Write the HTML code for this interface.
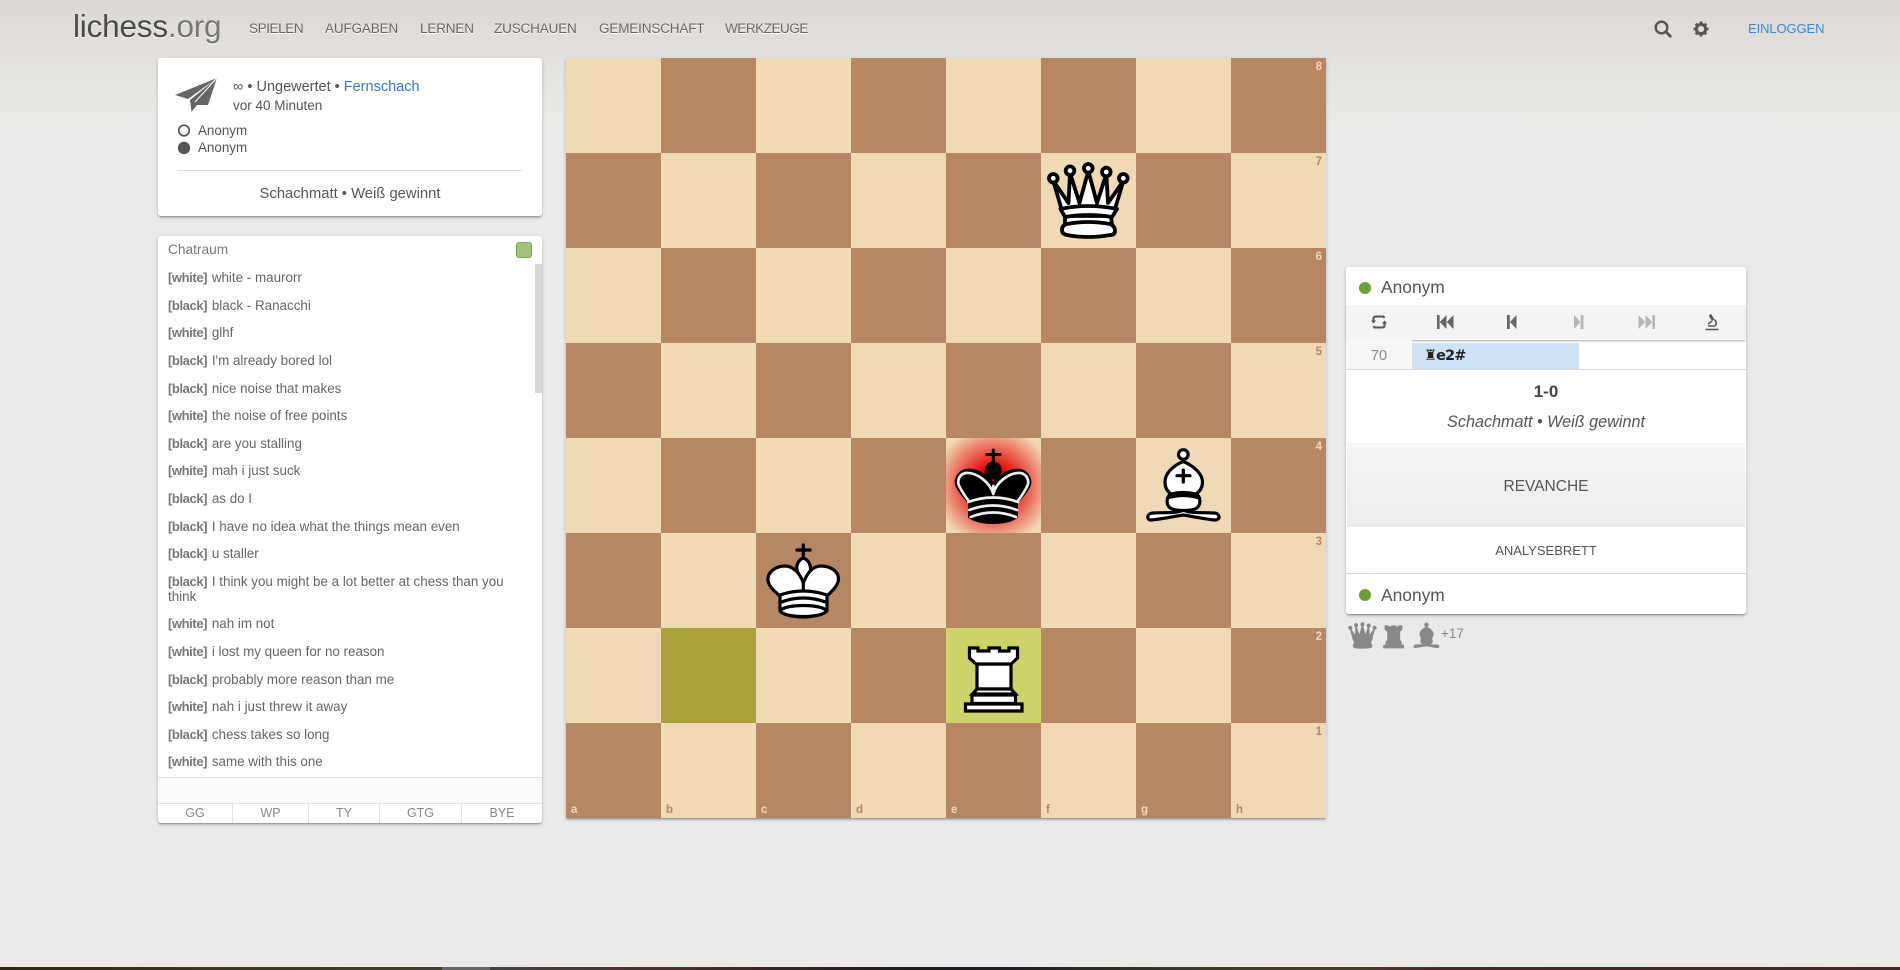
<!DOCTYPE html>
<html lang="de"><head><meta charset="utf-8"><title>lichess.org</title>
<style>
html,body{margin:0;padding:0}
body{width:1900px;height:970px;position:relative;overflow:hidden;font-family:"Liberation Sans",sans-serif;color:#555;background:linear-gradient(to bottom,#dcd9d4 0,#ebeae8 116px,#ebeae8 100%)}
.a{position:absolute;white-space:nowrap;line-height:1}
.card{position:absolute;background:#fff;border-radius:3px;box-shadow:0 2px 2px rgba(0,0,0,.14),0 2px 1px -1px rgba(0,0,0,.2),0 1px 5px rgba(0,0,0,.12)}
.nav{font-size:13.5px;color:#666;top:22px;text-shadow:0 1px 0 #fff;letter-spacing:-.15px}
.c{font-size:13.4px;left:168px;color:#666}
.c b{color:#777;letter-spacing:-.4px;font-size:13px;margin-right:1px}
.q{top:804px;font-size:12.5px;color:#888;text-align:center;line-height:19px;height:19px;border-right:1px solid #e2e2e2}
#board{position:absolute;left:566px;top:58px;width:760px;height:760px;box-shadow:0 2px 2px rgba(0,0,0,.14),0 2px 1px -1px rgba(0,0,0,.2),0 1px 5px rgba(0,0,0,.12);background:conic-gradient(#b58863 25%,#f0d9b5 0 50%,#b58863 0 75%,#f0d9b5 0) 0 0/190px 190px}
#board>div,#board>svg{position:absolute;width:95px;height:95px}
.k{position:absolute;font-size:11.5px;font-weight:bold;line-height:1}
</style></head><body>

<div class="a" style="left:73px;top:11px;font-size:31.5px;color:#4a4a4a;text-shadow:0 1px 0 #fff;letter-spacing:-.2px">lichess<span style="color:#777">.org</span></div>
<div class="a nav" style="left:249px;letter-spacing:-.4px">SPIELEN</div>
<div class="a nav" style="left:325px">AUFGABEN</div>
<div class="a nav" style="left:420px">LERNEN</div>
<div class="a nav" style="left:494px">ZUSCHAUEN</div>
<div class="a nav" style="left:599px">GEMEINSCHAFT</div>
<div class="a nav" style="left:725px;letter-spacing:-.45px">WERKZEUGE</div>

<svg class="a" style="left:1654px;top:20px" width="18" height="18" viewBox="0 0 18 18"><circle cx="7.5" cy="7.5" r="5.8" fill="none" stroke="#555" stroke-width="2.4"/><path d="M11.8 11.8L16.3 16.3" stroke="#555" stroke-width="2.8" stroke-linecap="round"/></svg>
<svg class="a" style="left:1693px;top:21px" width="16" height="16" viewBox="0 0 16 16"><circle cx="8" cy="8" r="4.6" fill="none" stroke="#555" stroke-width="3"/><path d="M8 .5V3M8 13v2.5M.5 8H3M13 8h2.5M2.7 2.7l1.8 1.8M11.5 11.5l1.8 1.8M13.3 2.7l-1.8 1.8M4.5 11.5l-1.8 1.8" stroke="#555" stroke-width="2.6"/></svg>
<div class="a" style="left:1748px;top:22px;font-size:13px;letter-spacing:-.1px;color:#3b87d8">EINLOGGEN</div>

<div class="card" style="left:158px;top:58px;width:384px;height:158px"></div>
<svg class="a" style="left:175px;top:78px" width="43" height="34" viewBox="0 0 43 34"><path d="M42 0L0 17l13 4z" fill="#666"/><path d="M42 0L15 22l1.5 12 5.5-7 11 0z" fill="#666"/><path d="M42 0L20 24" stroke="#fff" stroke-width="1" fill="none"/></svg>
<div class="a" style="left:233px;top:80px;font-size:14.5px;color:#555">∞ • Ungewertet • <span style="color:#3b78c4">Fernschach</span></div>
<div class="a" style="left:233px;top:99px;font-size:13.5px;color:#555">vor 40 Minuten</div>
<svg class="a" style="left:177px;top:123px" width="14" height="32" viewBox="0 0 14 32"><circle cx="7" cy="7.5" r="5.3" fill="#fff" stroke="#555" stroke-width="1.7"/><circle cx="7" cy="25" r="6.2" fill="#555"/></svg>
<div class="a" style="left:198px;top:124px;font-size:13.4px;color:#555">Anonym</div>
<div class="a" style="left:198px;top:141px;font-size:13.4px;color:#555">Anonym</div>
<div class="a" style="left:177px;top:170px;width:345px;height:1px;background:#ddd"></div>
<div class="a" style="left:158px;width:384px;text-align:center;top:187px;font-size:14.8px;color:#555">Schachmatt • Weiß gewinnt</div>

<div class="card" style="left:158px;top:236px;width:384px;height:587px"></div>
<div class="a" style="left:168px;top:243px;font-size:13.7px;color:#787878">Chatraum</div>
<div class="a" style="left:516px;top:242px;width:14px;height:14px;background:#a0c27a;border:1px solid #7ba84f;border-radius:3px"></div>
<div class="a" style="left:535px;top:264px;width:7px;height:129px;background:#d8d8d8"></div>
<div class="a c" style="top:271px"><b>[white]</b> white - maurorr</div>
<div class="a c" style="top:299px"><b>[black]</b> black - Ranacchi</div>
<div class="a c" style="top:326px"><b>[white]</b> glhf</div>
<div class="a c" style="top:354px"><b>[black]</b> I'm already bored lol</div>
<div class="a c" style="top:382px"><b>[black]</b> nice noise that makes</div>
<div class="a c" style="top:409px"><b>[white]</b> the noise of free points</div>
<div class="a c" style="top:437px"><b>[black]</b> are you stalling</div>
<div class="a c" style="top:464px"><b>[white]</b> mah i just suck</div>
<div class="a c" style="top:492px"><b>[black]</b> as do I</div>
<div class="a c" style="top:520px"><b>[black]</b> I have no idea what the things mean even</div>
<div class="a c" style="top:547px"><b>[black]</b> u staller</div>
<div class="a c" style="top:575px"><b>[black]</b> I think you might be a lot better at chess than you</div>
<div class="a c" style="top:590px">think</div>
<div class="a c" style="top:617px"><b>[white]</b> nah im not</div>
<div class="a c" style="top:645px"><b>[white]</b> i lost my queen for no reason</div>
<div class="a c" style="top:673px"><b>[black]</b> probably more reason than me</div>
<div class="a c" style="top:700px"><b>[white]</b> nah i just threw it away</div>
<div class="a c" style="top:728px"><b>[black]</b> chess takes so long</div>
<div class="a c" style="top:755px"><b>[white]</b> same with this one</div>
<div class="a" style="left:158px;top:777px;width:384px;background:#fafaf9;border-top:1px solid #ddd;border-bottom:1px solid #e2e2e2;box-sizing:border-box;height:27px"></div>
<div class="a q" style="left:158px;width:74px">GG</div>
<div class="a q" style="left:233px;width:75px">WP</div>
<div class="a q" style="left:309px;width:70px">TY</div>
<div class="a q" style="left:380px;width:81px">GTG</div>
<div class="a q" style="left:462px;width:80px;border:0">BYE</div>

<div id="board">
<div style="left:95px;top:570px;background:#aaa23a"></div>
<div style="left:380px;top:570px;background:#cdd26a"></div>
<div style="left:380px;top:380px;background:radial-gradient(ellipse at center,#f00 0%,#e70000 25%,rgba(169,0,0,0) 89%,rgba(158,0,0,0) 100%)"></div>

<svg style="left:475px;top:95px" viewBox="0 0 95 95"><g fill="#fff" stroke="#000" stroke-width="3.8" stroke-linejoin="round" stroke-linecap="round">
<path d="M20.5 56L12.3 28 27.5 50 29 20 38.5 50 47.3 18 56 50 65.3 21 67 50 82.3 28 74 56Z"/>
<path d="M24 63L24 72H71L70 63Z"/>
<path d="M19.5 56Q47 50 76 56L71 64Q47 60 24 64Z"/>
<path d="M26 71Q47 67 69 71Q74 73 74 78Q74 82 69 82Q47 86 26 82Q21 81 21 77Q21 72 26 71Z"/>
<circle cx="12.3" cy="25.3" r="4.3"/><circle cx="29" cy="17.7" r="4.3"/><circle cx="47.3" cy="15.3" r="4.3"/><circle cx="65.3" cy="19" r="4.3"/><circle cx="82.3" cy="25.3" r="4.3"/></g></svg>

<svg style="left:380px;top:380px" viewBox="0 0 95 95"><g fill="none" stroke-linecap="round" stroke-linejoin="round">
<path d="M47.3 12V26M41 16.5H54" stroke="#000" stroke-width="3"/>
<ellipse cx="47.3" cy="32.5" rx="8.5" ry="9" fill="#000"/>
<path d="M47.3 46C42 36 28 30 19 32C10 35 8 44 11 49C14 55 19 60 23 65L23 79C32 87 62 87 71 79L71 65C75 60 80 55 83 49C86 44 84 35 75 32C66 30 52 36 47.3 46Z" fill="#000" stroke="#000" stroke-width="2"/>
<path d="M47.3 56C44 44 30 34 20 35C13 36 11 43 13 47.5C15 52 19 58 23 63.5M47.3 56C50 44 64 34 74.5 35C81 36 83.5 43 81.5 47.5C79.5 52 75.5 58 71.5 63.5M47.3 48V56" stroke="#eee" stroke-width="2.7"/>
<path d="M22.3 64Q47 55 72 64M23.3 72Q47 63 71 72M24.7 79Q47 70 70 79" stroke="#eee" stroke-width="2.7"/>
</g></svg>

<svg style="left:570px;top:380px" viewBox="0 0 95 95"><g fill="#fff" stroke="#000" stroke-width="3.2" stroke-linejoin="round" stroke-linecap="round">
<circle cx="47.3" cy="16.5" r="4.8"/>
<path d="M17 75C28 74 40 76 47.3 72C55 76 66 74 78 75C84 75 85 82 79 82C68 81 54 78 47.3 77C40 78 26 81 15 82C10 82 11 75 17 75Z"/>
<path d="M36 55C30 58 29 68 36 71C42 73 53 73 59 71C66 68 65 58 59 55Q47 52 36 55Z"/>
<path d="M31.5 60Q47 55 63.5 60" fill="none"/>
<path d="M47.3 23.5C36 28 29 36 29 44C29 50 32 54 35 56Q47 53 60 56C63 54 66.5 50 66.5 44C66.5 36 58 28 47.3 23.5Z"/>
<path d="M47.3 32V44M41 37.7H54" fill="none"/>
</g></svg>

<svg style="left:190px;top:475px" viewBox="0 0 95 95"><g fill="#fff" stroke="#000" stroke-width="3.2" stroke-linejoin="round" stroke-linecap="round">
<path d="M47.3 12V25M41 17H54" fill="none"/>
<path d="M47.3 25C42 27 40 33 41 37C42 41 45 46 47.3 50C50 46 53 41 54.5 37C55 33 53 27 47.3 25Z"/>
<path d="M24 63C18 58 11 52 12 45C13 37 22 33 29 33C37 33 44 40 47.3 50C51 40 57 33 65 33C74 33 82 38 82.5 45C83 52 76 58 71 63Q47 54 24 63Z"/>
<path d="M47.3 50V58" fill="none"/>
<path d="M24 62V78C32 86 62 86 71 78V62Q47 54 24 62Z"/>
<path d="M24 69.5Q47 60.5 71 69.5" fill="none"/>
<ellipse cx="47.3" cy="78" rx="22.5" ry="5.5"/>
</g></svg>

<svg style="left:380px;top:570px" viewBox="0 0 95 95"><g fill="#fff" stroke="#000" stroke-width="3.2" stroke-linejoin="miter">
<path d="M31 36V61H65V36Z"/>
<path d="M23.5 20H32V23H43V20H53.5V23H63V20H71.5V30L65 36H30L23.5 30Z"/>
<path d="M31 61L26.5 66H69.5L65 61Z"/>
<path d="M26 67H69.5V75.5H26Z"/>
<path d="M19.5 76H76V83H19.5Z"/>
</g></svg>

<span class="k" style="right:4px;top:4px;color:#f0d9b5">8</span>
<span class="k" style="right:4px;top:99px;color:#b58863">7</span>
<span class="k" style="right:4px;top:194px;color:#f0d9b5">6</span>
<span class="k" style="right:4px;top:289px;color:#b58863">5</span>
<span class="k" style="right:4px;top:384px;color:#f0d9b5">4</span>
<span class="k" style="right:4px;top:479px;color:#b58863">3</span>
<span class="k" style="right:4px;top:574px;color:#f0d9b5">2</span>
<span class="k" style="right:4px;top:669px;color:#b58863">1</span>
<span class="k" style="left:5px;bottom:2px;color:#f0d9b5">a</span>
<span class="k" style="left:100px;bottom:2px;color:#b58863">b</span>
<span class="k" style="left:195px;bottom:2px;color:#f0d9b5">c</span>
<span class="k" style="left:290px;bottom:2px;color:#b58863">d</span>
<span class="k" style="left:385px;bottom:2px;color:#f0d9b5">e</span>
<span class="k" style="left:480px;bottom:2px;color:#b58863">f</span>
<span class="k" style="left:575px;bottom:2px;color:#f0d9b5">g</span>
<span class="k" style="left:670px;bottom:2px;color:#b58863">h</span>
</div>

<div class="card" style="left:1346px;top:267px;width:400px;height:347px"></div>
<svg class="a" style="left:1359px;top:282px" width="12" height="12"><circle cx="6" cy="6" r="6" fill="#6d9f33"/></svg>
<div class="a" style="left:1381px;top:279px;font-size:17.4px;color:#555">Anonym</div>
<div class="a" style="left:1346px;top:305px;width:400px;height:35px;background:#f5f4f2;box-shadow:0 2px 2px -1px rgba(0,0,0,.35)"></div>
<div class="a" style="left:1346px;top:340px;width:66px;height:29px;background:#f7f6f4"></div>

<svg class="a" style="left:1371px;top:314px" width="16" height="16" viewBox="0 0 16 16"><path d="M2.5 7V4.5Q2.5 2.5 5 2.5H12.5L13.5 4M13.500 9V11.5Q13.5 13.5 11 13.5H3.5L2.5 12" fill="none" stroke="#555" stroke-width="2"/><path d="M0 6.5H5L2.5 9.5ZM11 9.5H16L13.5 6.5Z" fill="#555"/></svg>
<svg class="a" style="left:1437px;top:315px" width="17" height="14" viewBox="0 0 17 14"><path d="M0 0h2.6v14H0zM9.5 0v14L2.8 7zM16.5 0v14L9.8 7z" fill="#666"/></svg>
<svg class="a" style="left:1507px;top:315px" width="10" height="14" viewBox="0 0 10 14"><path d="M0 0h2.8v14H0zM9.5 0v14L3 7z" fill="#666"/></svg>
<svg class="a" style="left:1574px;top:315px" width="10" height="14" viewBox="0 0 10 14"><path d="M9.5 0H6.7v14h2.8zM0 0v14l6.5-7z" fill="#b5b5b5"/></svg>
<svg class="a" style="left:1638px;top:315px" width="17" height="14" viewBox="0 0 17 14"><path d="M17 0h-2.6v14H17zM7.5 0v14l6.700-7zM.5 0v14l6.700-7z" fill="#b5b5b5"/></svg>
<svg class="a" style="left:1704px;top:313px" width="16" height="18" viewBox="0 0 16 18"><path d="M1.5 16.5H14.5M4 13H11" stroke="#555" stroke-width="1.5" fill="none"/><path d="M7 1L10.5 6.500 8 8 4.800 2.500Z" fill="#555"/><path d="M10.5 6.800A4.200 4.200 0 0 1 11 13" fill="none" stroke="#555" stroke-width="1.6"/><path d="M4 11L8 8" stroke="#555" stroke-width="1.5"/></svg>

<div class="a" style="left:1346px;width:66px;top:349px;text-align:center;font-size:14.5px;color:#888">70</div>
<div class="a" style="left:1412px;top:343px;width:167px;height:26px;background:#cfe2f3"></div>
<div class="a" style="left:1424px;top:349px;font-size:14.5px;font-weight:bold;color:#222;font-family:'DejaVu Sans',sans-serif;letter-spacing:-.9px">♜e2#</div>
<div class="a" style="left:1346px;top:369px;width:400px;height:1px;background:#d9d9d9"></div>
<div class="a" style="left:1346px;width:400px;top:383px;text-align:center;font-size:17px;font-weight:bold;color:#444">1-0</div>
<div class="a" style="left:1346px;width:400px;top:414px;text-align:center;font-size:16.2px;font-style:italic;color:#555">Schachmatt • Weiß gewinnt</div>
<div class="a" style="left:1347px;top:443px;width:398px;height:84px;background:linear-gradient(to bottom,#f6f6f6,#ececec)"></div>
<div class="a" style="left:1346px;width:400px;top:479px;text-align:center;font-size:15.5px;color:#555">REVANCHE</div>
<div class="a" style="left:1346px;width:400px;top:544px;text-align:center;font-size:13px;color:#555">ANALYSEBRETT</div>
<div class="a" style="left:1346px;top:573px;width:400px;height:1px;background:#d9d9d9"></div>
<svg class="a" style="left:1359px;top:589px" width="12" height="12"><circle cx="6" cy="6" r="6" fill="#6d9f33"/></svg>
<div class="a" style="left:1381px;top:587px;font-size:17.4px;color:#555">Anonym</div>

<svg class="a" style="left:1345.5px;top:618.5px" width="33" height="33" viewBox="0 0 95 95"><g fill="#888" stroke="#888" stroke-width="3.4" stroke-linejoin="round"><path d="M20.5 56L12.3 28 27.5 50 29 20 38.5 50 47.3 18 56 50 65.3 21 67 50 82.3 28 74 56Z"/><path d="M19.5 56Q47 50 76 56L71 64H24Z"/><path d="M24 63V72H71V63Z"/><path d="M26 71Q47 67 69 71Q74 73 74 78Q74 82 69 82Q47 86 26 82Q21 81 21 77Q21 72 26 71Z"/><circle cx="12.3" cy="25.3" r="4.3"/><circle cx="29" cy="17.7" r="4.3"/><circle cx="47.3" cy="15.3" r="4.3"/><circle cx="65.3" cy="19" r="4.3"/><circle cx="82.3" cy="25.3" r="4.3"/></g></svg>
<svg class="a" style="left:1376.5px;top:618.5px" width="33" height="33" viewBox="0 0 95 95"><path fill="#888" stroke="#888" stroke-width="3.2" d="M23.5 20H32V23H43V20H53.5V23H63V20H71.5V30L65 36V61L69.5 66V75.5H76V83H19.5V76H26V66L31 61V36L23.5 30Z"/></svg>
<svg class="a" style="left:1409.5px;top:618.5px" width="33" height="33" viewBox="0 0 95 95"><g fill="#888" stroke="#888" stroke-width="3.2" stroke-linejoin="round"><circle cx="47.3" cy="16.5" r="4.8"/><path d="M17 75C28 74 40 76 47.3 72C55 76 66 74 78 75C84 75 85 82 79 82C68 81 54 78 47.3 77C40 78 26 81 15 82C10 82 11 75 17 75Z"/><path d="M36 55C30 58 29 68 36 71C42 73 53 73 59 71C66 68 65 58 59 55Q47 52 36 55Z"/><path d="M47.3 23.5C36 28 29 36 29 44C29 50 32 54 35 56Q47 53 60 56C63 54 66.5 50 66.5 44C66.5 36 58 28 47.3 23.5Z"/></g></svg>
<div class="a" style="left:1441px;top:627px;font-size:13.5px;color:#888">+17</div>

<div class="a" style="left:0;top:967px;width:1900px;height:3px;background:linear-gradient(to right,#2c2518 0,#3a3526 220px,#3f3f2c 442px,#666 442px,#666 490px,#424242 490px,#4a2c2c 680px,#1d1d1f 900px,#1d1d22 1000px,#3a3a2a 1200px,#453c2e 1350px,#4a2525 1450px,#3a2a25 1900px)"></div>
</body></html>
